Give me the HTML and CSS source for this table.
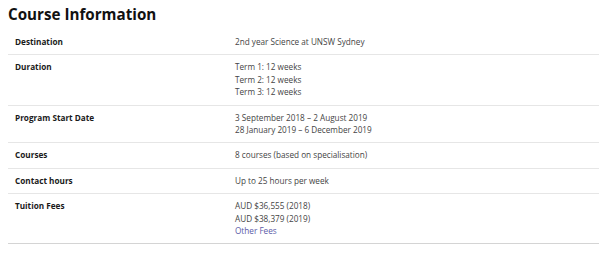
FILE: index.html
```html
<!DOCTYPE html>
<html lang="en">
<head>
<meta charset="utf-8">
<title>Course Information</title>
<link rel="stylesheet" href="styles.css">
</head>
<body>
<h2 class="title">Course Information</h2>
<table class="info">
  <tr><th>Destination</th><td>2nd year Science at UNSW Sydney</td></tr>
  <tr><th>Duration</th><td>Term 1: 12 weeks<br>Term 2: 12 weeks<br>Term 3: 12 weeks</td></tr>
  <tr><th>Program Start Date</th><td>3 September 2018 – 2 August 2019<br>28 January 2019 – 6 December 2019</td></tr>
  <tr><th>Courses</th><td>8 courses (based on specialisation)</td></tr>
  <tr><th>Contact hours</th><td>Up to 25 hours per week</td></tr>
  <tr class="last"><th>Tuition Fees</th><td>AUD $36,555 (2018)<br>AUD $38,379 (2019)<br><a href="#" class="link">Other Fees</a></td></tr>
</table>
</body>
</html>
```
FILE: styles.css
```css
body {
  margin: 0;
  padding: 0 1px 0 8px;
  background: #fff;
  font-family: "Open Sans", "Noto Sans", sans-serif;
  color: #444;
}
.title {
  margin: 0;
  height: 30px;
  padding-top: 4px;
  box-sizing: border-box;
  font-size: 15.2px;
  font-weight: 700;
  color: #111;
  line-height: 20px;
}
.info {
  width: 100%;
  border-collapse: collapse;
  font-size: 8.2px;
  line-height: 12.4px;
}
.info th,
.info td {
  text-align: left;
  vertical-align: top;
  padding: 6px 7px 6px 7px;
  border-bottom: 1px solid #e6e6e6;
}
.info th {
  width: 206px;
  font-weight: 700;
  color: #1a1a1a;
}
.info .last th,
.info .last td {
  border-bottom-color: #d4d4d4;
}
.link {
  color: #5b5ba8;
  text-decoration: none;
}
```
